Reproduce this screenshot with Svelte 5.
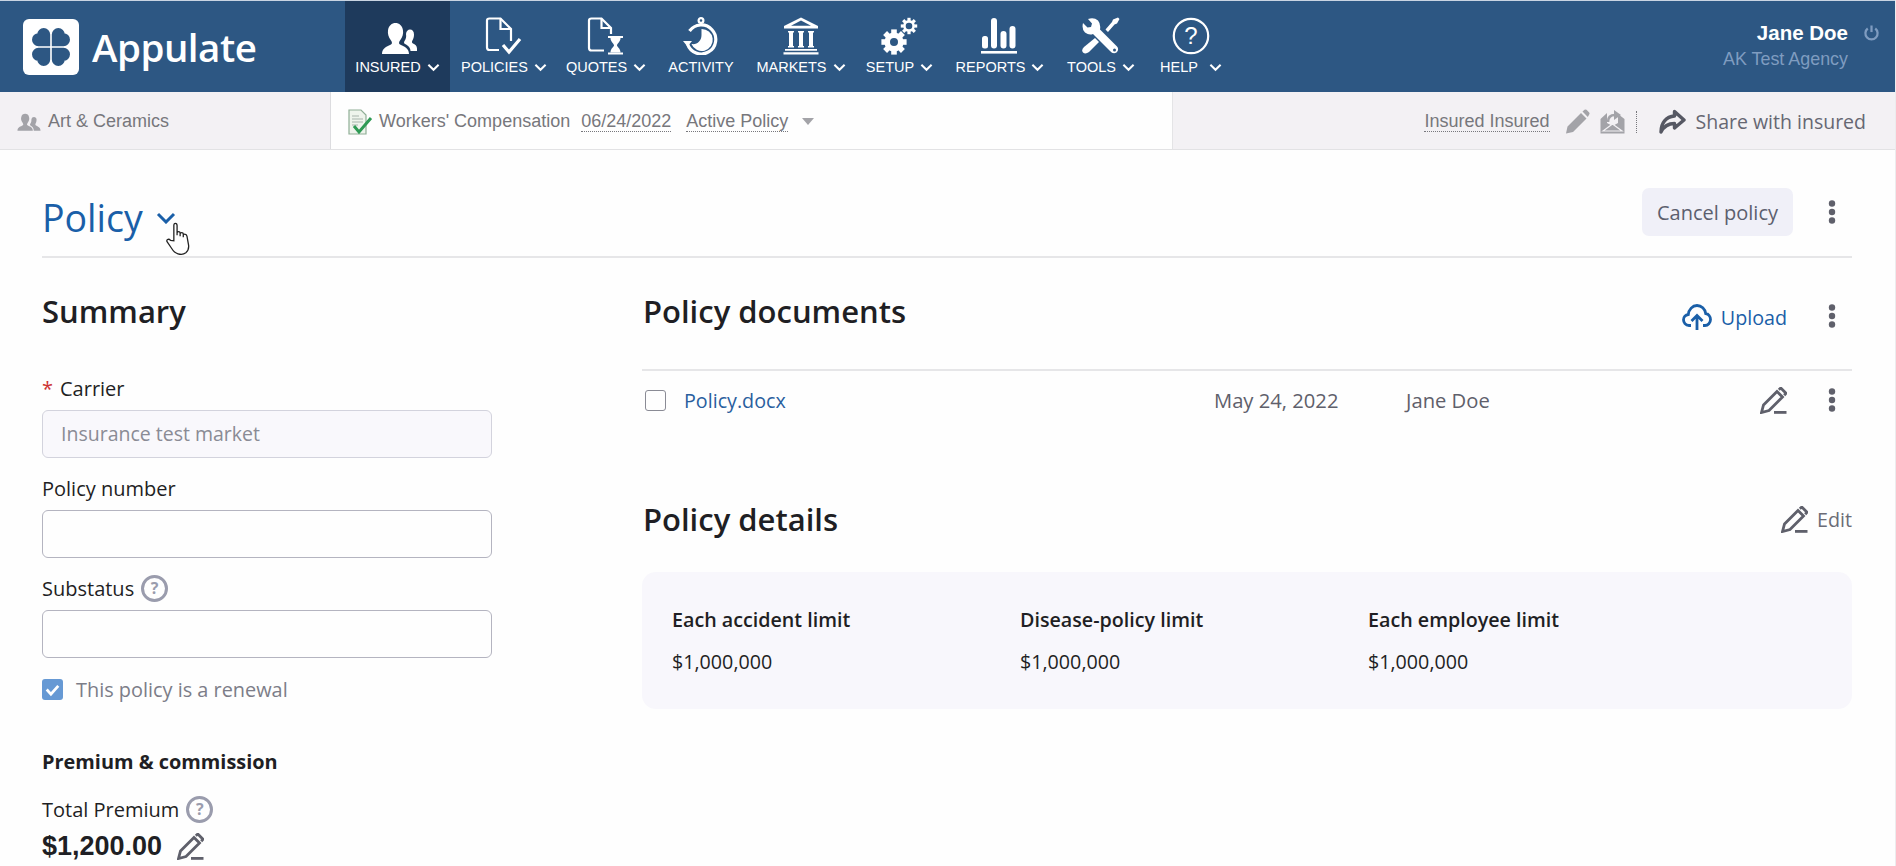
<script>
	const navItems = [
		{ key: "insured", label: "INSURED", chevron: true, active: true },
		{ key: "policies", label: "POLICIES", chevron: true },
		{ key: "quotes", label: "QUOTES", chevron: true },
		{ key: "activity", label: "ACTIVITY", chevron: false },
		{ key: "markets", label: "MARKETS", chevron: true },
		{ key: "setup", label: "SETUP", chevron: true },
		{ key: "reports", label: "REPORTS", chevron: true },
		{ key: "tools", label: "TOOLS", chevron: true },
		{ key: "help", label: "HELP", chevron: true },
	];

	const limits = [
		{ label: "Each accident limit", value: "$1,000,000" },
		{ label: "Disease-policy limit", value: "$1,000,000" },
		{ label: "Each employee limit", value: "$1,000,000" },
	];
</script>

{#snippet kebab()}
	<svg class="kebab" viewBox="0 0 8 26" aria-hidden="true">
		<circle cx="4" cy="4.5" r="3.2" />
		<circle cx="4" cy="13" r="3.2" />
		<circle cx="4" cy="21.5" r="3.2" />
	</svg>
{/snippet}

{#snippet pen()}
	<svg class="pen" viewBox="0 0 27 27" aria-hidden="true">
		<path d="M1.5 25.5 L3.5 18 L17 4.5 L22.5 10 L9 23.5 Z" />
		<path d="M18.8 2.7 L20.8 1 L26 6.2 L24.2 8.2" />
		<path d="M14 25.4 H26.5" />
	</svg>
{/snippet}

{#snippet hint()}
	<span class="hint">?</span>
{/snippet}

<div class="page">
	<header class="topbar">
		<div class="brand">
			<span class="logo">
				<svg viewBox="0 0 56 56" aria-hidden="true">
					<rect width="56" height="56" rx="6" fill="#fff" />
					{#each [0, 90, 180, 270] as turn}
						<path fill="#2d5783" transform="rotate({turn} 28 28)" d="M27.2 27.2 H15.5 A6.5 6.5 0 0 1 15.5 14.2 L20 20 L14.2 15.5 A6.5 6.5 0 0 1 27.2 15.5 Z" />
					{/each}
				</svg>
			</span>
			<span class="wordmark">Appulate</span>
		</div>

		<nav class="menu">
			{#each navItems as item}
				<div class="menu-item" class:active={item.active}>
					<svg class="menu-icon" viewBox="0 0 38 38" aria-hidden="true">
						{#if item.key === "insured"}
							<path fill="#fff" d="M3 37 C3 31 8 29.5 12 27.5 C13.5 26.5 13 25 12 23.5 C9.5 20 8.5 17 9 13.5 C9.5 8.5 13 6 16.5 6 C20 6 23.5 8.5 24 13.5 C24.5 17 23.5 20 21 23.5 C20 25 19.5 26.5 21 27.5 C25 29.5 30 31 30 37 Z" />
							<path fill="#fff" d="M31.5 34 C31.5 30.5 29 28.5 26 27 C25 26.4 24.7 25.4 25.4 24.3 C27 21.6 27.5 20 27 17 C27.3 14 29 12.5 31 12.5 C33.2 12.5 35 14.2 35 17.5 C35 20 34.5 21.8 33.3 23.8 C32.7 25 33 26 34 26.6 C36 27.6 38 28.8 38 31.5 V34 Z" />
						{:else if item.key === "policies"}
							<path class="line" d="M14 33 H4.5 Q2 33 2 30.5 V3.5 Q2 1.5 4.5 1.5 H15.5 L26 12 V24" />
							<path class="line" d="M15.5 1.5 V12 H26" />
							<path class="line thick" d="M18 28 L24 35 L35 22" />
						{:else if item.key === "quotes"}
							<path class="line" d="M17 33.5 H4.5 Q2 33.5 2 31 V3.5 Q2 1.5 4.5 1.5 H14.5 L24 11 V17" />
							<path class="line" d="M14.5 1.5 V11 H24" />
							<path class="line" d="M21 20 H36 M21 36.5 H36" />
							<path fill="#fff" d="M23.5 21 H33.5 C33.5 25 30 26.5 30 28.3 C30 30 33.5 31.5 33.5 35.5 H23.5 C23.5 31.5 27 30 27 28.3 C27 26.5 23.5 25 23.5 21 Z" />
						{:else if item.key === "activity"}
							<circle class="line" cx="19" cy="3.5" r="2.4" />
							<path class="line" d="M19 6 V9" />
							<path class="line thick" d="M7.5 14 A 14.5 14.5 0 1 1 5.5 27" />
							<path fill="#fff" d="M19.5 12 A 11 11 0 1 1 9.5 27 C15 28 19.5 24 19.5 18 Z" />
							<path fill="#fff" d="M1 24 L10 24 L5.5 29.5 Z" />
						{:else if item.key === "markets"}
							<path fill="#fff" d="M19 0.5 L36 9 V11.5 H2 V9 Z" />
							<path fill="#2d5783" d="M19 3.5 L29 8.7 H9 Z" />
							<path fill="#fff" d="M6 14 H12 V15.5 H11 V29 H12 V30.5 H6 V29 H7 V15.5 H6 Z M16 14 H22 V15.5 H21 V29 H22 V30.5 H16 V29 H17 V15.5 H16 Z M26 14 H32 V15.5 H31 V29 H32 V30.5 H26 V29 H27 V15.5 H26 Z" />
							<path fill="#fff" d="M3 32 H35 V33.8 H3 Z M1.5 35.3 H36.5 V37.5 H1.5 Z" />
						{:else if item.key === "setup"}
							<g transform="translate(13 25)">
								<circle cx="0" cy="0" r="6.8" fill="none" stroke="#fff" stroke-width="5.6" />
								{#each [0, 45, 90, 135, 180, 225, 270, 315] as a}
									<rect x="-2.8" y="-12.6" width="5.6" height="5" fill="#fff" transform="rotate({a})" />
								{/each}
							</g>
							<g transform="translate(28 9)">
								<circle cx="0" cy="0" r="4.6" fill="none" stroke="#fff" stroke-width="2.6" />
								{#each [0, 45, 90, 135, 180, 225, 270, 315] as a}
									<rect x="-1.6" y="-8.2" width="3.2" height="3" fill="#fff" transform="rotate({a})" />
								{/each}
							</g>
						{:else if item.key === "reports"}
							<rect x="1" y="19" width="6" height="12.5" rx="2.5" fill="#fff" />
							<rect x="10" y="1" width="6" height="30.5" rx="3" fill="#fff" />
							<rect x="19.5" y="14" width="6" height="17.5" rx="3" fill="#fff" />
							<rect x="28.5" y="9" width="6" height="22.5" rx="3" fill="#fff" />
							<rect x="0" y="34" width="36" height="2.6" fill="#fff" />
						{:else if item.key === "tools"}
							<path fill="#fff" d="M6 2 L10 6.5 L9 10 L5.5 10.5 L1 6 Q-0.5 12 3 15.5 Q7 18.5 11 17 L28 34 Q31 37.5 34.5 35.5 Q37.5 32.5 35 29.5 L18 12.5 Q19 7 16 3.5 Q12 0 6 2 Z" />
							<circle cx="32.5" cy="33" r="1.5" fill="#2d5783" />
							<path fill="#fff" d="M36 0.5 L37.5 2 L35 6.5 L32.5 7.5 L26 15 L23.5 12.5 L30 5 L31 2.5 Z" />
							<path fill="#fff" d="M13 21 L17 25 L7 35 Q3.5 37.5 1 35.5 Q-1 33 2 30 Z" />
						{:else if item.key === "help"}
							<circle class="line" cx="19" cy="19" r="17.2" />
							<text x="19" y="27" text-anchor="middle" class="q">?</text>
						{/if}
					</svg>
					<div class="menu-label" class:wide={item.key === "help"}>
						<span>{item.label}</span>
						{#if item.chevron}
							<svg class="chev" viewBox="0 0 14 9" aria-hidden="true"><path d="M1.5 1.5 L7 7 L12.5 1.5" /></svg>
						{/if}
					</div>
				</div>
			{/each}
		</nav>

		<div class="user">
			<div class="user-line">
				<span class="user-name">Jane Doe</span>
				<svg class="power" viewBox="0 0 16 18" aria-hidden="true">
					<path d="M8 1 V8" />
					<path d="M4 4.2 A 6.5 6.5 0 1 0 12 4.2" />
				</svg>
			</div>
			<div class="agency">AK Test Agency</div>
		</div>
	</header>

	<div class="subbar">
		<div class="sub-left">
			<svg class="sub-people" viewBox="0 0 25 18" aria-hidden="true">
				<path fill="#a3a3a8" d="M0.5 18 C0.5 14.5 4 13.8 6 12.5 C6.8 11.8 6.5 11 6 10 C4.5 8 4 6 4.3 4.5 C4.7 1.5 6.6 0.5 8.5 0.5 C10.4 0.5 12.3 1.5 12.7 4.5 C13 6 12.5 8 11 10 C10.5 11 10.2 11.8 11 12.5 C13 13.8 16.5 14.5 16.5 18 Z" />
				<path fill="#a3a3a8" d="M17.5 18 C17.5 15 15.5 13.6 14 12.7 C13.4 12.2 13.5 11.4 14 10.6 C15 9 15 7.5 15 6.3 C15.2 4.5 16.4 3.7 17.7 3.7 C19.2 3.7 20.4 4.7 20.4 6.6 C20.4 8 20 9.4 19.4 10.5 C19 11.3 19 12 19.7 12.6 C21.5 13.6 24.5 14.4 24.5 18 Z" />
			</svg>
			<span>Art &amp; Ceramics</span>
		</div>
		<div class="sub-mid">
			<svg class="sub-doc" viewBox="0 0 25 26" aria-hidden="true">
				<path d="M1 1 H13 L18 6 V25 H1 Z" fill="#eef4ec" stroke="#8fae96" stroke-width="1.2" />
				<path d="M4 7 H11 M4 10 H15 M4 13 H15 M4 16 H10" stroke="#a7b3ac" stroke-width="1.2" fill="none" />
				<path d="M6 17 L11 23 L23 9" stroke="#2e9a54" stroke-width="3" fill="none" />
			</svg>
			<span class="sub-text">Workers' Compensation</span>
			<span class="sub-text dotted">06/24/2022</span>
			<span class="sub-text dotted">Active Policy</span>
			<span class="caret"></span>
		</div>
		<div class="sub-right">
			<span class="sub-text dotted">Insured Insured</span>
			<svg class="sub-pencil" viewBox="0 0 25 25" aria-hidden="true">
				<path fill="#a3a3a8" d="M1 24.5 L2.5 17.5 L16 4 L21.5 9.5 L8 23 Z M17.5 2.5 L19.5 0.8 Q20.5 0 21.5 0.8 L24.2 3.5 Q25 4.5 24.2 5.5 L22.8 8 Z" />
			</svg>
			<svg class="sub-mail" viewBox="0 0 25 25" aria-hidden="true">
				<path fill="#a3a3a8" d="M0.5 10 L7 4 V14 L12.5 17 L18 14 V5 L24.5 10 V24.5 H0.5 Z" />
				<path fill="#a3a3a8" d="M3 22 L12.5 15 L22 22 Z" stroke="#f3f1f4" stroke-width="1.2" />
				<path fill="none" stroke="#a3a3a8" stroke-width="2.6" d="M8 13 C8 8 11 6 15 6" />
				<path fill="#a3a3a8" d="M14 1 L21 6 L14 11 Z" />
			</svg>
			<span class="sub-sep"></span>
			<svg class="sub-share" viewBox="0 0 27 25" aria-hidden="true">
				<path fill="none" stroke="#565863" stroke-width="3.4" stroke-linejoin="round" d="M15.5 2.5 L25 11 L15.5 19 V14.5 C9 14.5 5 17 2 23 C2 14 7 7.5 15.5 7 Z" />
			</svg>
			<span class="share-text">Share with insured</span>
		</div>
	</div>

	<main class="content">
		<div class="title-row">
			<div class="title">
				<h1>Policy</h1>
				<svg class="title-chev" viewBox="0 0 20 12" aria-hidden="true"><path d="M2 2 L10 10 L18 2" /></svg>
				<svg class="cursor" viewBox="0 0 26 36" aria-hidden="true">
					<path d="M8.5 20 V3.5 Q8.5 1 10.2 1 Q12 1 12 3.5 V14 V11.5 Q12 10 13.7 10 Q15.3 10 15.3 11.5 V15 V12.5 Q15.3 11 17 11 Q18.7 11 18.7 12.5 V16 V14 Q18.7 12.7 20.3 12.7 Q22.3 12.7 22.7 15 L24.5 25 Q25 30 21.5 33 Q18 35.5 13 34 Q9 33 6 28 L1.5 21.5 Q0.2 19.5 1.7 18.5 Q3.3 17.7 5 19.5 Z" />
				</svg>
			</div>
			<div class="title-actions">
				<button class="cancel">Cancel policy</button>
				{@render kebab()}
			</div>
		</div>

		<div class="columns">
			<section class="summary">
				<h2>Summary</h2>

				<div class="field first">
					<div class="field-label"><span class="req">*</span>Carrier</div>
					<div class="input disabled">Insurance test market</div>
				</div>
				<div class="field">
					<div class="field-label">Policy number</div>
					<div class="input"></div>
				</div>
				<div class="field">
					<div class="field-label">Substatus {@render hint()}</div>
					<div class="input"></div>
				</div>

				<div class="renewal">
					<span class="renewal-box">
						<svg viewBox="0 0 20 20" aria-hidden="true"><path d="M4.5 10 L8.5 14.5 L15.5 6.5" /></svg>
					</span>
					<span>This policy is a renewal</span>
				</div>

				<h3>Premium &amp; commission</h3>
				<div class="field-label total">Total Premium {@render hint()}</div>
				<div class="amount">
					<span>$1,200.00</span>
					{@render pen()}
				</div>
			</section>

			<section class="details">
				<div class="docs-head">
					<h2>Policy documents</h2>
					<div class="upload">
						<svg viewBox="0 0 30 27" aria-hidden="true">
							<path d="M9 21.5 H7 C3.5 21.5 1.5 18.5 1.5 15.8 C1.5 13 3.5 10.8 6.3 10.5 C6.8 5.5 10.5 1.5 15 1.5 C19.5 1.5 23 5 23.7 9.5 C26.5 10 28.5 12.5 28.5 15.5 C28.5 18.8 26 21.5 23 21.5 H21" />
							<path d="M15 26 V12 M9.5 17 L15 11.5 L20.5 17" />
						</svg>
						<span>Upload</span>
					</div>
					{@render kebab()}
				</div>

				<div class="doc-row">
					<span class="doc-check"></span>
					<a class="doc-name" href="#policy">Policy.docx</a>
					<span class="doc-date">May 24, 2022</span>
					<span class="doc-owner">Jane Doe</span>
					<span class="doc-pen">{@render pen()}</span>
					{@render kebab()}
				</div>

				<div class="details-head">
					<h2>Policy details</h2>
					<div class="edit">
						{@render pen()}
						<span>Edit</span>
					</div>
				</div>

				<div class="limits">
					{#each limits as limit}
						<div class="limit">
							<div class="limit-label">{limit.label}</div>
							<div class="limit-value">{limit.value}</div>
						</div>
					{/each}
				</div>
			</section>
		</div>
	</main>
</div>

<style>
	:global(body) {
		margin: 0;
		background: #fefefe;
	}

	.page {
		height: 866px;
		overflow: hidden;
		box-sizing: border-box;
		border-right: 1px solid #ececee;
		font-family: "Open Sans", "Noto Sans", sans-serif;
		color: #1f1f24;
		background: #fefefe;
	}

	.topbar {
		display: flex;
		height: 92px;
		box-sizing: border-box;
		border-top: 1px solid #c9d4e2;
		background: #2d5783;
		color: #fff;
		font-family: "Liberation Sans", Arial, sans-serif;
	}

	.brand {
		display: flex;
		align-items: center;
		gap: 13px;
		width: 322px;
		padding-left: 23px;
	}

	.logo {
		display: block;
		width: 56px;
		height: 56px;
	}

	.logo svg {
		display: block;
		width: 56px;
		height: 56px;
	}

	.wordmark {
		font-family: "Open Sans", sans-serif;
		font-size: 38.5px;
		font-weight: 600;
		letter-spacing: -0.5px;
	}

	.menu {
		display: grid;
		grid-template-columns: 105px 108px 96px 94px 106px 91px 110px 92px 88px;
	}

	.menu-item {
		display: flex;
		flex-direction: column;
		align-items: center;
		padding-top: 16px;
	}

	.menu-item.active {
		background: #1e3a5c;
		height: 93px;
		box-sizing: border-box;
	}

	.menu-icon {
		display: block;
		width: 38px;
		height: 38px;
	}

	.line {
		fill: none;
		stroke: #fff;
		stroke-width: 2.2;
	}

	.thick {
		stroke-width: 3.2;
	}

	.q {
		fill: #fff;
		font-family: "Liberation Sans", Arial, sans-serif;
		font-size: 24px;
	}

	.menu-label {
		display: flex;
		align-items: center;
		gap: 6px;
		margin-top: 3px;
		font-size: 14.5px;
		line-height: 18px;
		white-space: nowrap;
	}

	.menu-label.wide {
		gap: 11px;
	}

	.chev {
		width: 13px;
		height: 9px;
		fill: none;
		stroke: #fff;
		stroke-width: 2.2;
	}

	.user {
		flex: 1;
		padding: 19px 16px 0 0;
		text-align: right;
	}

	.user-line {
		display: flex;
		justify-content: flex-end;
		align-items: center;
		gap: 16px;
	}

	.user-name {
		font-size: 20.5px;
		font-weight: 700;
		line-height: 26px;
	}

	.power {
		width: 15px;
		height: 18px;
		fill: none;
		stroke: #7f9cc0;
		stroke-width: 2.4;
	}

	.agency {
		margin: 1px 31px 0 0;
		font-size: 17.9px;
		line-height: 24px;
		color: #7f9cc0;
	}

	.subbar {
		display: grid;
		grid-template-columns: 331px 841px 1fr;
		height: 58px;
		border-bottom: 1px solid #e2e2e4;
		box-sizing: border-box;
		font-family: "Liberation Sans", Arial, sans-serif;
		font-size: 18px;
		color: #77777c;
	}

	.sub-left,
	.sub-mid,
	.sub-right {
		display: flex;
		align-items: center;
		padding-top: 2px;
		box-sizing: border-box;
	}

	.sub-left {
		gap: 7px;
		padding-left: 17px;
		background: #f3f1f4;
		border-right: 1px solid #dcdcdf;
	}

	.sub-people {
		width: 24px;
		height: 18px;
	}

	.sub-mid {
		padding-left: 17px;
		background: #fefefe;
	}

	.sub-doc {
		width: 25px;
		height: 26px;
		margin-right: 6px;
	}

	.sub-text {
		margin-right: 11px;
		white-space: nowrap;
	}

	.dotted {
		border-bottom: 1px dotted #77777c;
		line-height: 20px;
	}

	.dotted + .dotted {
		margin-left: 4px;
	}

	.caret {
		width: 0;
		height: 0;
		margin-left: 3px;
		border-left: 6px solid transparent;
		border-right: 6px solid transparent;
		border-top: 7px solid #a3a3a8;
	}

	.sub-right {
		justify-content: flex-end;
		padding-right: 29px;
		background: #f3f1f4;
		border-left: 1px solid #e4e4e6;
	}

	.sub-right .sub-text {
		margin-right: 15px;
	}

	.sub-pencil,
	.sub-mail {
		width: 25px;
		height: 25px;
	}

	.sub-mail {
		margin-left: 10px;
	}

	.sub-sep {
		height: 22px;
		margin: 0 22px 0 11px;
		border-left: 1px dotted #77777c;
	}

	.sub-share {
		width: 27px;
		height: 25px;
		margin-right: 10px;
	}

	.share-text {
		font-family: "Open Sans", sans-serif;
		font-size: 19.5px;
		color: #666772;
	}

	.content {
		padding: 0 43px 0 42px;
	}

	.title-row {
		display: flex;
		justify-content: space-between;
		height: 108px;
		box-sizing: border-box;
		border-bottom: 2px solid #e6e6e8;
	}

	.title {
		position: relative;
		display: flex;
		align-items: center;
		height: 106px;
		padding-top: 30px;
		box-sizing: border-box;
	}

	h1 {
		margin: 0;
		font-size: 37.5px;
		font-weight: 400;
		color: #1a5fa8;
		line-height: 48px;
	}

	.title-chev {
		width: 20px;
		height: 12px;
		margin-left: 13px;
		fill: none;
		stroke: #1a5fa8;
		stroke-width: 3;
	}

	.cursor {
		position: absolute;
		left: 124px;
		top: 72px;
		width: 24px;
		height: 34px;
		fill: #fff;
		stroke: #222;
		stroke-width: 1.4;
	}

	.title-actions {
		display: flex;
		align-items: center;
		gap: 35px;
		height: 48px;
		margin-top: 38px;
		padding-right: 16px;
	}

	.kebab {
		display: block;
		flex: none;
		width: 8px;
		height: 26px;
		fill: #5f606b;
	}

	.cancel {
		height: 48px;
		padding: 0 15px;
		border: 0;
		border-radius: 7px;
		background: #f0f0f8;
		color: #5c5f6e;
		font: inherit;
		font-size: 20px;
	}

	.columns {
		display: grid;
		grid-template-columns: 450px 1fr;
		column-gap: 150px;
	}

	h2 {
		margin: 0;
		font-size: 31px;
		font-weight: 600;
		line-height: 40px;
		color: #1f1f24;
	}

	.summary h2 {
		margin-top: 33px;
	}

	.field-label {
		display: flex;
		align-items: center;
		gap: 7px;
		height: 30px;
		font-size: 20px;
		font-weight: 500;
	}

	.req {
		color: #c33;
	}

	.field {
		margin-top: 15px;
	}

	.field.first {
		margin-top: 42px;
	}

	.input {
		height: 48px;
		box-sizing: border-box;
		margin-top: 7px;
		padding: 0 18px;
		border: 1px solid #b4b4c0;
		border-radius: 6px;
		font-size: 19.5px;
		line-height: 46px;
	}

	.input.disabled {
		background: #f9f8fc;
		border-color: #d3d3dd;
		color: #8a8b95;
	}

	.hint {
		display: inline-flex;
		align-items: center;
		justify-content: center;
		width: 21px;
		height: 21px;
		border: 3px solid #9a9cad;
		border-radius: 50%;
		color: #9a9cad;
		font-size: 16px;
		font-weight: 700;
	}

	.renewal {
		display: flex;
		align-items: center;
		gap: 13px;
		margin-top: 18px;
		font-size: 19.9px;
		color: #7c7d88;
	}

	.renewal-box {
		display: block;
		width: 21px;
		height: 21px;
		border-radius: 3px;
		background: #6699d4;
	}

	.renewal-box svg {
		display: block;
		fill: none;
		stroke: #fff;
		stroke-width: 2.6;
	}

	h3 {
		margin: 45px 0 0;
		font-size: 19.9px;
		font-weight: 700;
		line-height: 28px;
	}

	.total {
		margin-top: 18px;
	}

	.amount {
		display: flex;
		align-items: center;
		gap: 15px;
		margin-top: 5px;
		font-family: "Liberation Sans", Arial, sans-serif;
		font-size: 27px;
		font-weight: 700;
		line-height: 34px;
	}

	.pen {
		display: block;
		flex: none;
		width: 27px;
		height: 27px;
		fill: none;
		stroke: #5f606b;
		stroke-width: 2.8;
	}

	.docs-head {
		display: flex;
		align-items: flex-start;
		height: 113px;
		padding: 33px 16px 0 1px;
		box-sizing: border-box;
		border-bottom: 2px solid #e6e6e8;
	}

	.docs-head h2 {
		flex: 1;
	}

	.docs-head :global(.kebab) {
		margin-top: 12px;
	}

	.upload {
		display: flex;
		align-items: center;
		gap: 9px;
		margin: 13px 41px 0 0;
		color: #1a5fa8;
		font-size: 19.7px;
	}

	.upload svg {
		width: 30px;
		height: 27px;
		fill: none;
		stroke: #1a5fa8;
		stroke-width: 2.8;
	}

	.doc-row {
		display: flex;
		align-items: center;
		height: 58px;
		padding-left: 3px;
		padding-right: 16px;
		font-size: 20.2px;
		color: #5f606b;
	}

	.doc-check {
		flex: none;
		width: 21px;
		height: 21px;
		box-sizing: border-box;
		border: 1.5px solid #8a8b95;
		border-radius: 3px;
	}

	.doc-name {
		width: 530px;
		margin-left: 18px;
		color: #2a5f9e;
		font-size: 19.7px;
		text-decoration: none;
	}

	.doc-date {
		width: 192px;
	}

	.doc-owner {
		flex: 1;
	}

	.doc-pen {
		margin-right: 41px;
	}

	.details-head {
		display: flex;
		align-items: center;
		height: 60px;
		margin-top: 60px;
		padding-left: 1px;
	}

	.details-head h2 {
		flex: 1;
	}

	.edit {
		display: flex;
		align-items: center;
		gap: 9px;
		font-size: 19.7px;
		color: #6b6c76;
	}

	.limits {
		display: grid;
		grid-template-columns: repeat(3, 348px);
		height: 137px;
		box-sizing: border-box;
		margin-top: 23px;
		padding: 34px 30px 0;
		border-radius: 14px;
		background: #f8f7fc;
	}

	.limit-label {
		font-size: 19.7px;
		font-weight: 600;
		line-height: 28px;
	}

	.limit-value {
		margin-top: 14px;
		font-size: 19.7px;
		line-height: 28px;
	}
</style>
